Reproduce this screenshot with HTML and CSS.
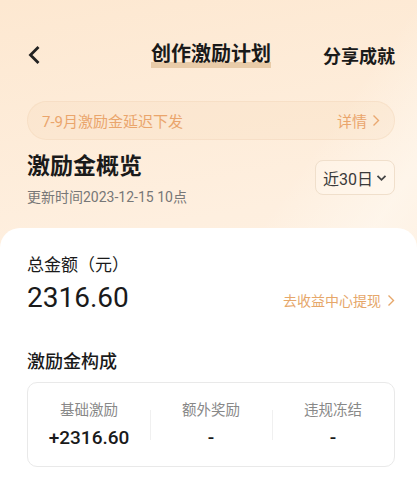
FILE: index.html
```html
<!DOCTYPE html>
<html lang="zh-CN">
<head>
<meta charset="utf-8">
<title>创作激励计划</title>
<link rel="stylesheet" href="styles.css">
</head>
<body>
<div class="page">
  <header class="nav">
    <span class="back">
      <svg width="14" height="18" viewBox="0 0 14 18"><path d="M10.5 2 L3.5 9 L10.5 16" fill="none" stroke="#222" stroke-width="2.8" stroke-linecap="square"/></svg>
    </span>
    <h1 class="nav-title"><span class="mark">创作激励计划</span></h1>
    <span class="share">分享成就</span>
  </header>

  <div class="notice">
    <span class="notice-text">7-9月激励金延迟下发</span>
    <span class="notice-more">详情
      <svg width="8" height="13" viewBox="0 0 8 13"><path d="M1.5 1.5 L6.5 6.5 L1.5 11.5" fill="none" stroke="#eaa870" stroke-width="1.4"/></svg>
    </span>
  </div>

  <section class="overview">
    <div class="overview-head">
      <h2 class="overview-title">激励金概览</h2>
      <p class="updated">更新时间2023-12-15 10点</p>
    </div>
    <button class="range">近30日
      <svg width="11" height="8" viewBox="0 0 11 8"><path d="M1.5 1.8 L5.5 5.8 L9.5 1.8" fill="none" stroke="#444" stroke-width="1.8"/></svg>
    </button>
  </section>

  <main class="card">
    <div class="total-label">总金额（元）</div>
    <div class="total-row">
      <div class="total-amount">2316.60</div>
      <a class="withdraw">去收益中心提现
        <svg width="8" height="13" viewBox="0 0 8 13"><path d="M1.5 1.5 L6.5 6.5 L1.5 11.5" fill="none" stroke="#e6a76a" stroke-width="1.4"/></svg>
      </a>
    </div>

    <h3 class="compose-title">激励金构成</h3>
    <div class="compose">
      <div class="col">
        <div class="col-label">基础激励</div>
        <div class="col-value">+2316.60</div>
      </div>
      <div class="col">
        <div class="col-label">额外奖励</div>
        <div class="col-value">-</div>
      </div>
      <div class="col">
        <div class="col-label">违规冻结</div>
        <div class="col-value">-</div>
      </div>
    </div>
  </main>
</div>
</body>
</html>
```

FILE: styles.css
```css
* { box-sizing: border-box; }
html, body { margin: 0; padding: 0; }
body {
  font-family: Roboto, "Noto Sans CJK SC", "Noto Sans", sans-serif;
  color: #1a1a1a;
  background: #fef0e0;
}
.page {
  min-height: 100vh;
  display: flex;
  flex-direction: column;
  background:
    linear-gradient(125deg, rgba(255,255,255,0) 55%, rgba(255,251,245,0.5) 70%, rgba(255,255,255,0) 85%),
    linear-gradient(170deg, #fde8d1 0%, #feefdf 45%, #fef3e6 100%);
}
.nav {
  display: grid;
  grid-template-columns: 1fr auto 1fr;
  align-items: center;
  height: 40px;
  margin-top: 35px;
  padding: 0 22px 0 27px;
}
.back { display: flex; align-items: center; }
.nav-title {
  margin: 0;
  font-size: 20px;
  font-weight: 700;
  line-height: 24px;
}
.mark {
  display: inline-block;
  padding-bottom: 2px;
  background: linear-gradient(#e8cba8, #e8cba8) no-repeat left bottom / 100% 6px;
}
.share {
  justify-self: end;
  font-size: 18px;
  font-weight: 700;
  color: #1a1a1a;
}
.notice {
  margin: 26px 22px 0 27px;
  height: 39px;
  border-radius: 20px;
  background: rgba(246, 210, 172, 0.18);
  border: 1px solid rgba(240, 210, 178, 0.35);
  display: flex;
  align-items: center;
  justify-content: space-between;
  padding: 0 14px 0 14px;
  color: #eaa56c;
  font-size: 15px;
}
.notice-more { display: flex; align-items: center; gap: 5px; }
.overview {
  display: flex;
  justify-content: space-between;
  align-items: flex-start;
  margin: 12px 22px 0 27px;
}
.overview-title {
  margin: 0;
  font-size: 23px;
  line-height: 30px;
  font-weight: 700;
  color: #1a1a1a;
}
.updated {
  margin: 5px 0 0;
  font-size: 14px;
  line-height: 20px;
  color: #777;
}
.range {
  margin-top: 8px;
  height: 35px;
  width: 80px;
  border: 1px solid #f0dfcb;
  border-radius: 8px;
  background: rgba(255, 248, 238, 0.5);
  font-family: inherit;
  font-size: 16px;
  font-weight: 400;
  color: #3a3a3a;
  display: flex;
  align-items: center;
  justify-content: center;
  gap: 3px;
  padding: 0;
}
.card {
  flex: 1;
  margin-top: 21px;
  background: #fff;
  border-radius: 20px 20px 0 0;
  padding: 25px 22px 0 27px;
}
.total-label {
  font-size: 17px;
  line-height: 24px;
  color: #1a1a1a;
}
.total-row {
  margin-top: 3px;
  display: flex;
  align-items: center;
  justify-content: space-between;
}
.total-amount {
  font-size: 28px;
  line-height: 36px;
  font-weight: 400;
  color: #1a1a1a;
}
.withdraw {
  display: flex;
  align-items: center;
  gap: 6px;
  font-size: 14px;
  color: #e6a76a;
  margin-top: 4px;
}
.compose-title {
  margin: 33px 0 0;
  font-size: 18px;
  line-height: 26px;
  font-weight: 500;
  color: #1a1a1a;
}
.compose {
  margin-top: 7px;
  height: 85px;
  border: 1px solid #e9e9e9;
  border-radius: 10px;
  display: grid;
  grid-template-columns: 1fr 1fr 1fr;
  padding: 18px 0 0;
}
.col {
  position: relative;
  text-align: center;
}
.col + .col::before {
  content: "";
  position: absolute;
  left: 0;
  top: 9px;
  height: 30px;
  width: 1px;
  background: #f0f0f0;
}
.col-label {
  font-size: 14.5px;
  line-height: 20px;
  color: #888;
}
.col-value {
  margin-top: 4px;
  font-size: 19px;
  line-height: 26px;
  font-weight: 500;
  color: #1a1a1a;
}
```
